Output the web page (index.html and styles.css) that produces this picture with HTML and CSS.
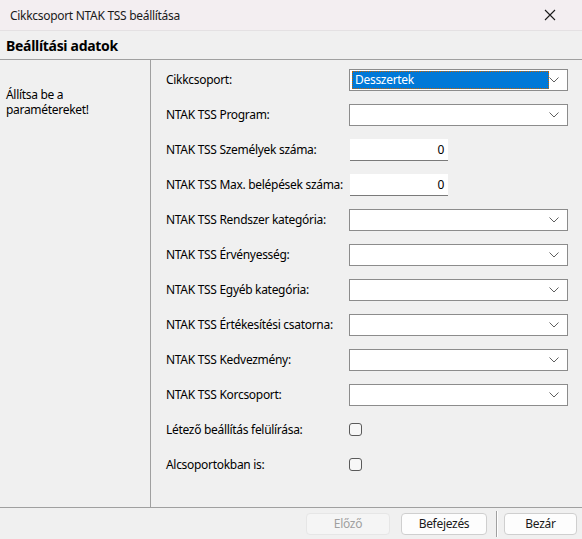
FILE: index.html
```html
<!DOCTYPE html>
<html lang="hu">
<head>
<meta charset="utf-8">
<title>Cikkcsoport NTAK TSS beállítása</title>
<link rel="stylesheet" href="styles.css">
</head>
<body>
<div class="window">
  <div class="titlebar">
    <span class="title">Cikkcsoport NTAK TSS beállítása</span>
    <svg class="close" width="12" height="12" viewBox="0 0 12 12"><path d="M1 1 L11 11 M11 1 L1 11" stroke="#1a1a1a" stroke-width="1.1" fill="none"/></svg>
  </div>
  <div class="header">Beállítási adatok</div>
  <div class="main">
    <div class="side">Állítsa be a paramétereket!</div>
    <div class="form">
      <label class="lbl">Cikkcsoport:</label>
      <div class="combo"><span class="sel">Desszertek</span><svg class="chev" width="10" height="6" viewBox="0 0 10 6"><path d="M0.5 0.5 L5 5 L9.5 0.5" stroke="#606060" fill="none"/></svg></div>

      <label class="lbl">NTAK TSS Program:</label>
      <div class="combo"><span class="empty"></span><svg class="chev" width="10" height="6" viewBox="0 0 10 6"><path d="M0.5 0.5 L5 5 L9.5 0.5" stroke="#606060" fill="none"/></svg></div>

      <label class="lbl">NTAK TSS Személyek száma:</label>
      <div class="num">0</div>

      <label class="lbl">NTAK TSS Max. belépések száma:</label>
      <div class="num">0</div>

      <label class="lbl">NTAK TSS Rendszer kategória:</label>
      <div class="combo"><span class="empty"></span><svg class="chev" width="10" height="6" viewBox="0 0 10 6"><path d="M0.5 0.5 L5 5 L9.5 0.5" stroke="#606060" fill="none"/></svg></div>

      <label class="lbl">NTAK TSS Érvényesség:</label>
      <div class="combo"><span class="empty"></span><svg class="chev" width="10" height="6" viewBox="0 0 10 6"><path d="M0.5 0.5 L5 5 L9.5 0.5" stroke="#606060" fill="none"/></svg></div>

      <label class="lbl">NTAK TSS Egyéb kategória:</label>
      <div class="combo"><span class="empty"></span><svg class="chev" width="10" height="6" viewBox="0 0 10 6"><path d="M0.5 0.5 L5 5 L9.5 0.5" stroke="#606060" fill="none"/></svg></div>

      <label class="lbl">NTAK TSS Értékesítési csatorna:</label>
      <div class="combo"><span class="empty"></span><svg class="chev" width="10" height="6" viewBox="0 0 10 6"><path d="M0.5 0.5 L5 5 L9.5 0.5" stroke="#606060" fill="none"/></svg></div>

      <label class="lbl">NTAK TSS Kedvezmény:</label>
      <div class="combo"><span class="empty"></span><svg class="chev" width="10" height="6" viewBox="0 0 10 6"><path d="M0.5 0.5 L5 5 L9.5 0.5" stroke="#606060" fill="none"/></svg></div>

      <label class="lbl">NTAK TSS Korcsoport:</label>
      <div class="combo"><span class="empty"></span><svg class="chev" width="10" height="6" viewBox="0 0 10 6"><path d="M0.5 0.5 L5 5 L9.5 0.5" stroke="#606060" fill="none"/></svg></div>

      <label class="lbl">Létező beállítás felülírása:</label>
      <div class="check"></div>

      <label class="lbl">Alcsoportokban is:</label>
      <div class="check"></div>
    </div>
  </div>
  <div class="footer">
    <button class="btn prev">Előző</button>
    <button class="btn finish">Befejezés</button>
    <span class="vsep"></span>
    <button class="btn close-btn">Bezár</button>
  </div>
</div>
</body>
</html>
```
FILE: styles.css
```css
* { box-sizing: border-box; }
html, body { margin: 0; padding: 0; }
body {
  width: 582px;
  height: 539px;
  background: #f0f0f0;
  font-family: "Noto Sans", "Open Sans", sans-serif;
  font-size: 12px;
  letter-spacing: -0.3px;
  color: #000;
  overflow: hidden;
}
.window { display: flex; flex-direction: column; height: 539px; }
.titlebar {
  height: 31px;
  background: #f3eef1;
  border-bottom: 1px solid #e4e1e3;
  display: flex;
  align-items: center;
  justify-content: space-between;
  padding: 0 26px 0 10px;
}
.title { font-size: 12px; color: #1a1a1a; }
.header {
  height: 29px;
  display: flex;
  align-items: center;
  padding-left: 6px;
  font-weight: bold;
  font-size: 14px;
  border-bottom: 1px solid #a0a0a0;
}
.main {
  height: 448px;
  display: flex;
  border-bottom: 1px solid #a0a0a0;
}
.side {
  width: 151px;
  border-right: 1px solid #a0a0a0;
  padding: 27px 50px 0 6px;
  line-height: 15px;
}
.form {
  flex: 1;
  padding: 2px 0 0 15px;
  display: grid;
  grid-template-columns: 183px 219px;
  grid-auto-rows: 35px;
  align-items: center;
  align-content: start;
}
.lbl { white-space: nowrap; }
.combo {
  height: 22px;
  background: #fff;
  border: 1px solid #8c8c8c;
  display: flex;
  align-items: center;
  justify-content: space-between;
  padding: 0 8px 0 2px;
}
.sel {
  height: 18px;
  width: 197px;
  background: #0078d7;
  color: #fff;
  padding-left: 3px;
  line-height: 17px;
  outline: 1px dotted #c86400;
  outline-offset: -1px;
}
.chev { flex: none; }
.num {
  width: 98px;
  height: 22px;
  margin-left: 1px;
  background: #fff;
  border-bottom: 1px solid #7a7a7a;
  text-align: right;
  padding-right: 4px;
  line-height: 22px;
}
.check {
  width: 13px;
  height: 13px;
  border: 1px solid #5a5a5a;
  border-radius: 3px;
  background: #f7f7f7;
}
.footer {
  flex: 1;
  display: flex;
  align-items: center;
  justify-content: flex-end;
  padding: 0 5px 0 0;
}
.btn {
  font-family: inherit;
  font-size: 12px;
  letter-spacing: -0.3px;
  height: 22px;
  background: #fdfdfd;
  border: 1px solid #cfcfcf;
  border-radius: 4px;
  color: #1a1a1a;
  padding: 0;
}
.prev {
  width: 84px;
  background: #f5f5f5;
  border-color: #e6e6e6;
  color: #a0a0a0;
}
.finish { width: 86px; margin-left: 11px; }
.close-btn { width: 73px; margin-left: 6px; }
.vsep {
  width: 2px;
  height: 26px;
  border-left: 1px solid #a0a0a0;
  border-right: 1px solid #fff;
  margin-left: 9px;
}
```
